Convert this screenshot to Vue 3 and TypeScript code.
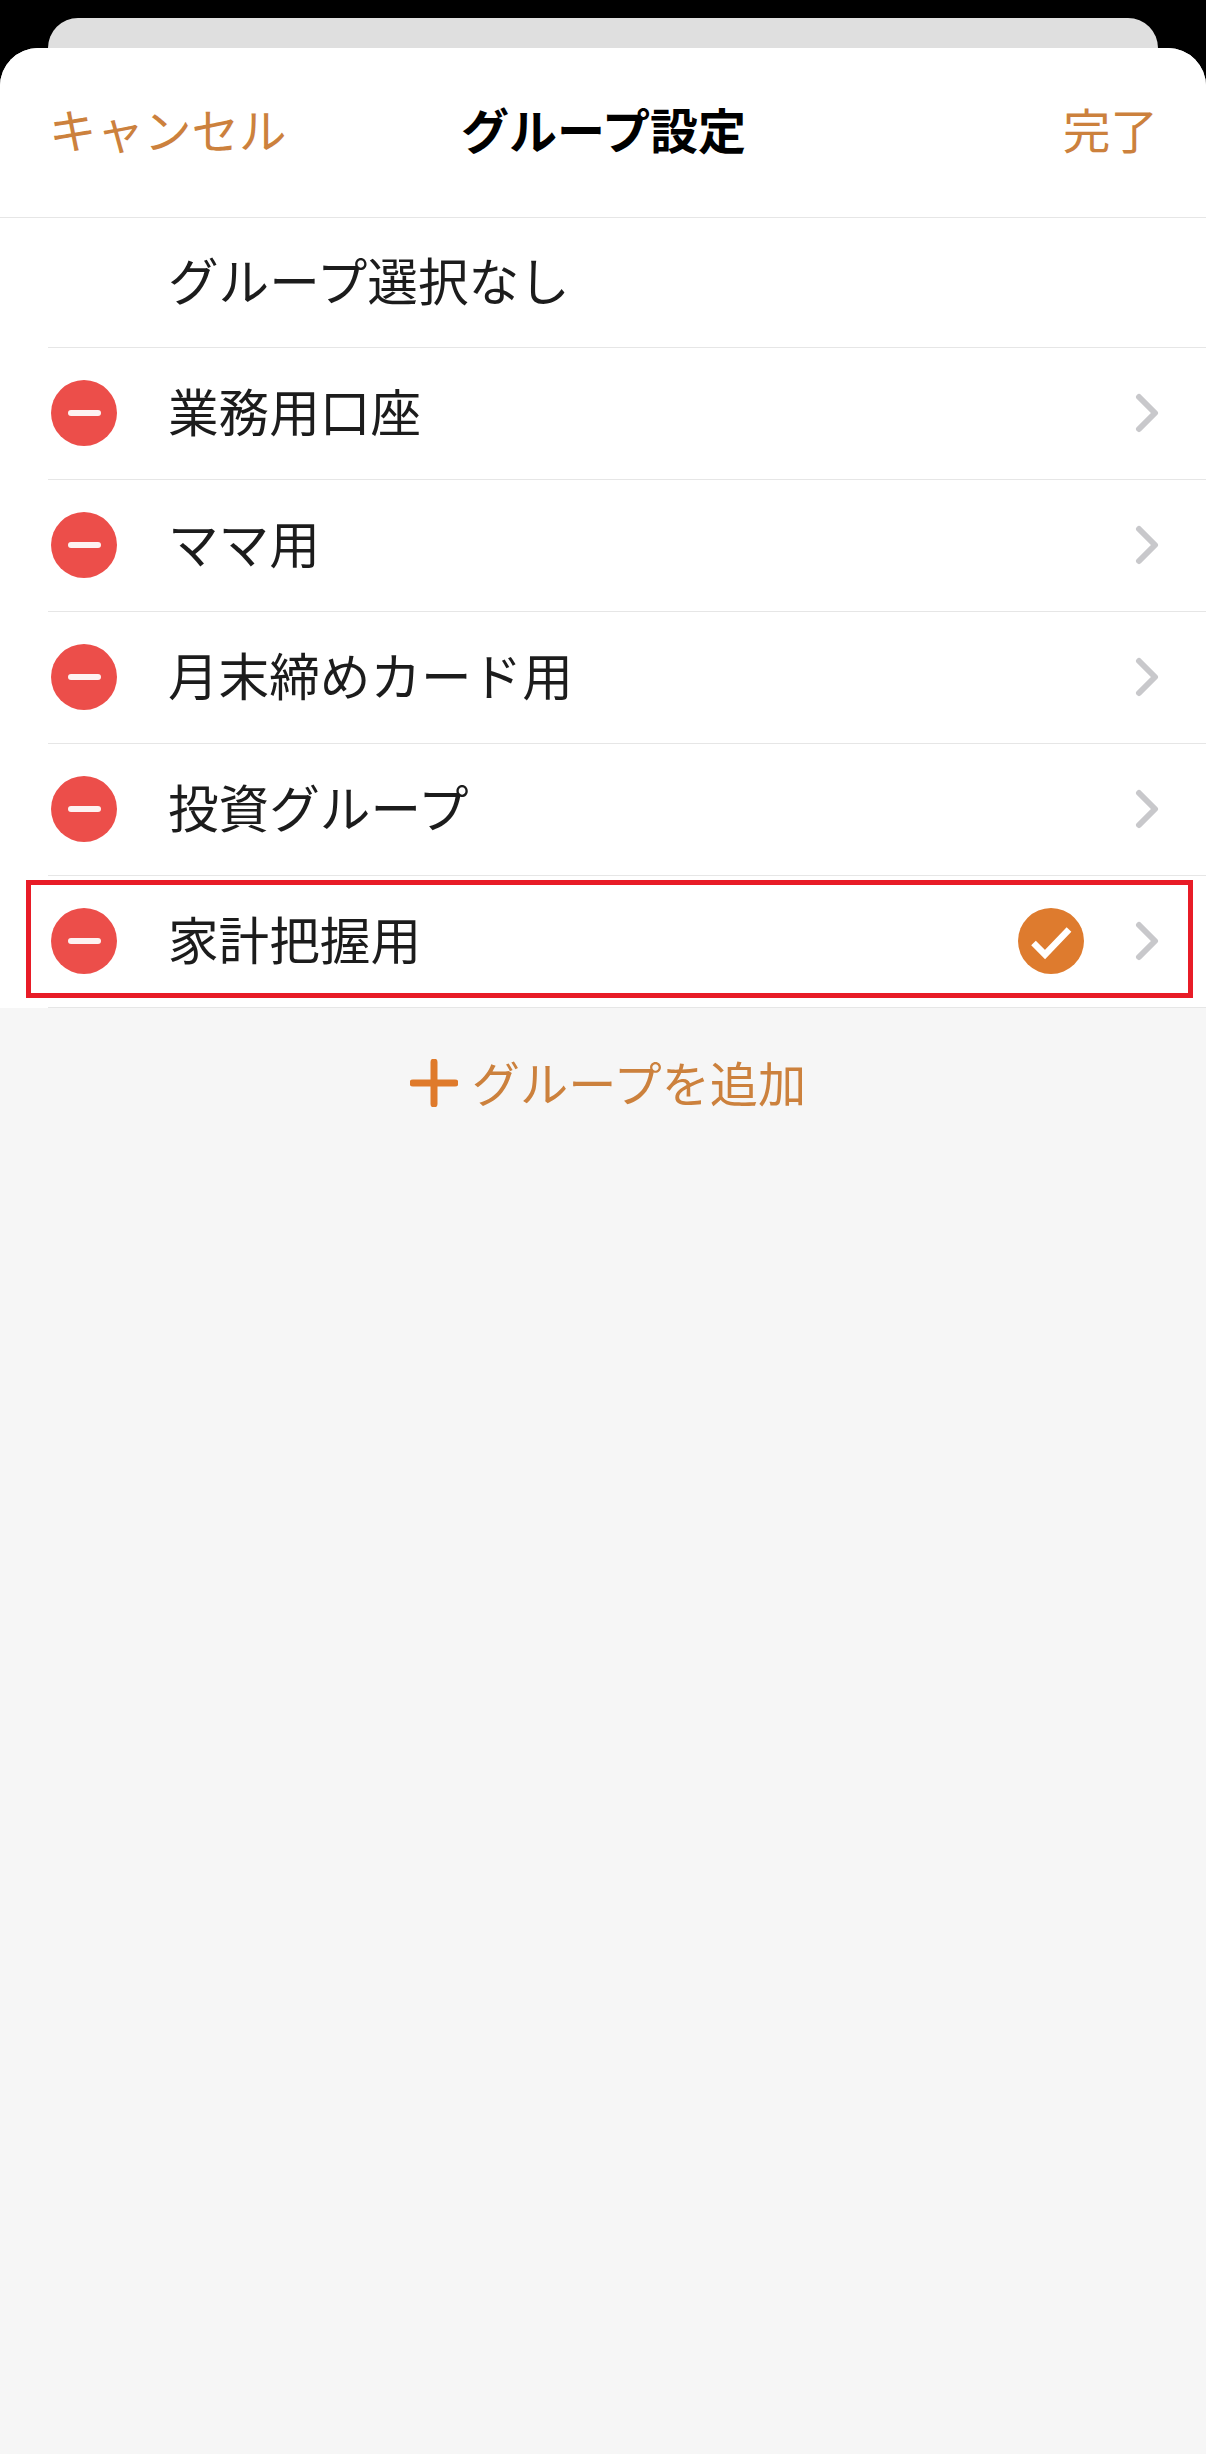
<script setup lang="ts">
interface Group {
  name: string
  removable: boolean
  selected: boolean
}

const groups: Group[] = [
  { name: 'グループ選択なし', removable: false, selected: false },
  { name: '業務用口座', removable: true, selected: false },
  { name: 'ママ用', removable: true, selected: false },
  { name: '月末締めカード用', removable: true, selected: false },
  { name: '投資グループ', removable: true, selected: false },
  { name: '家計把握用', removable: true, selected: true },
]
</script>

<template>
  <div class="screen">
    <div class="back-card"></div>
    <div class="sheet">
      <header class="nav">
        <span class="nav-action">キャンセル</span>
        <span class="nav-title">グループ設定</span>
        <span class="nav-action nav-done">完了</span>
      </header>
      <ul class="list">
        <li v-for="g in groups" :key="g.name" class="row" :class="{ highlighted: g.selected }">
          <div class="row-body">
            <span class="icon-slot">
              <span v-if="g.removable" class="minus"><span class="minus-bar"></span></span>
            </span>
            <span class="row-name">{{ g.name }}</span>
            <svg v-if="g.selected" class="check" width="66" height="66" viewBox="0 0 66 66">
              <circle cx="33" cy="33" r="33" fill="#de7b2e" />
              <path d="M15.500 35 L27 46.500 L51 21.500" fill="none" stroke="#fff" stroke-width="6.500" />
            </svg>
            <svg v-if="g.removable" class="chevron" width="24" height="40" viewBox="0 0 24 40">
              <path d="M4 4 L20 20 L4 36" fill="none" stroke="#c8c8cb" stroke-width="6" stroke-linecap="round" stroke-linejoin="round" />
            </svg>
          </div>
          <div v-if="g.selected" class="red-box"></div>
        </li>
      </ul>
      <div class="add">
        <svg class="plus" width="48" height="48" viewBox="0 0 48 48">
          <path d="M3 24 H45 M24 3 V45" fill="none" stroke="#df7a2b" stroke-width="7" stroke-linecap="round" />
        </svg>
        <span class="add-label">グループを追加</span>
      </div>
    </div>
  </div>
</template>

<style>
html,
body {
  margin: 0;
  background: #000;
}
</style>

<style scoped>
.screen {
  display: flex;
  flex-direction: column;
  height: 2454px;
  padding-top: 18px;
  box-sizing: border-box;
  background: #000;
  font-family: "Noto Sans CJK JP", sans-serif;
  overflow: hidden;
}
.back-card {
  flex: none;
  height: 30px;
  margin: 0 48px;
  background: #dfdfdf;
  border-radius: 30px 30px 0 0;
}
.sheet {
  flex: 1;
  display: flex;
  flex-direction: column;
  background: #f6f6f6;
  border-radius: 38px 38px 0 0;
  overflow: hidden;
}
.nav {
  flex: none;
  display: grid;
  grid-template-columns: 1fr auto 1fr;
  align-items: center;
  height: 169.500px;
  padding: 0 48px 8px 49px;
  box-sizing: border-box;
  background: #fff;
  border-bottom: 1.500px solid #e6e6e6;
}
.nav-action {
  font-size: 47.500px;
  line-height: 1;
  color: #cc813d;
}
.nav-done {
  justify-self: end;
}
.nav-title {
  font-size: 48px;
  line-height: 1;
  font-weight: 700;
  color: #000;
}
.list {
  flex: none;
  margin: 0;
  padding: 0;
  list-style: none;
  background: #fff;
}
.row {
  position: relative;
  padding-left: 48px;
}
.row-body {
  display: flex;
  align-items: center;
  height: 132px;
  box-sizing: border-box;
  padding-right: 48px;
  border-bottom: 1.500px solid #e6e6e6;
}
.row:first-child .row-body {
  height: 130.500px;
}
.icon-slot {
  flex: none;
  width: 120px;
  display: flex;
  align-items: center;
}
.minus {
  width: 66px;
  height: 66px;
  margin-left: 3px;
  margin-bottom: 2px;
  border-radius: 50%;
  background: #ec4e4a;
  display: flex;
  align-items: center;
  justify-content: center;
}
.minus-bar {
  width: 33px;
  height: 6px;
  border-radius: 3px;
  background: #fdf3f2;
}
.row-name {
  flex: 1;
  font-size: 50.600px;
  line-height: 1;
  padding-bottom: 6px;
  color: #1c1c1c;
}
.check {
  flex: none;
  margin-right: 51px;
  margin-bottom: 2px;
}
.chevron {
  flex: none;
  margin-right: -1px;
  margin-bottom: 2px;
}
.red-box {
  position: absolute;
  left: 26px;
  right: 13px;
  top: 4px;
  height: 118px;
  border: 5px solid #e81c27;
  box-sizing: border-box;
}
.add {
  flex: none;
  display: flex;
  align-items: center;
  justify-content: center;
  gap: 14px;
  height: 150px;
  padding-left: 10px;
}
.add-label {
  font-size: 48.200px;
  line-height: 1;
  padding-bottom: 4px;
  color: #cc813d;
}
</style>
